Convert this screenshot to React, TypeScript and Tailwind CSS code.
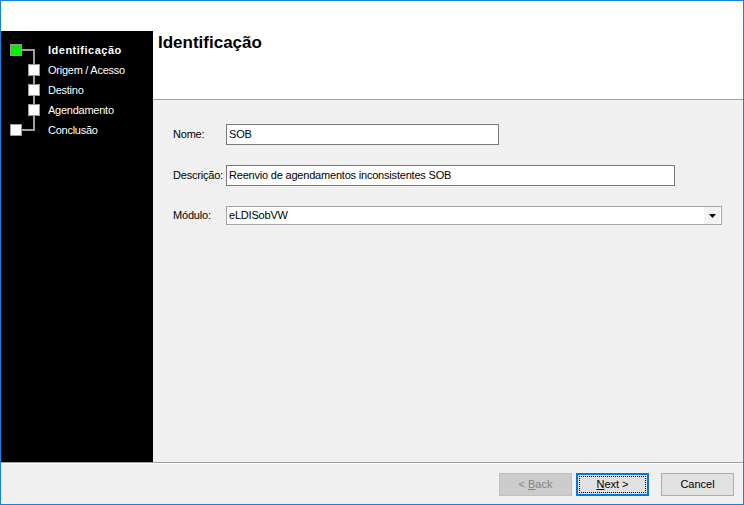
import React from "react";

const steps = [
  { label: "Identificação", active: true },
  { label: "Origem / Acesso", active: false },
  { label: "Destino", active: false },
  { label: "Agendamento", active: false },
  { label: "Conclusão", active: false },
];

function StepTree() {
  // squares + connector lines of the wizard step list
  return (
    <svg width="47" height="110" className="shrink-0">
      <rect x="21" y="18" width="13" height="2" fill="#a0a0a0" />
      <rect x="32" y="18" width="2" height="82" fill="#a0a0a0" />
      <rect x="21" y="98" width="13" height="2" fill="#a0a0a0" />
      <rect x="9.5" y="13.5" width="11" height="11" fill="#00f000" stroke="#999" />
      <rect x="27.5" y="33.5" width="11" height="11" fill="#fff" stroke="#999" />
      <rect x="27.5" y="53.5" width="11" height="11" fill="#fff" stroke="#999" />
      <rect x="27.5" y="73.5" width="11" height="11" fill="#fff" stroke="#999" />
      <rect x="9.5" y="93.5" width="11" height="11" fill="#fff" stroke="#999" />
    </svg>
  );
}

export default function App() {
  return (
    <div className="w-[744px] h-[505px] border border-[#1883d7] bg-white flex flex-col font-['Liberation_Sans',Arial,sans-serif] text-black text-[11px]">
      <div className="h-[462px] flex border-b border-[#a0a0a0]">
        {/* sidebar */}
        <div className="w-[152px] flex flex-col pt-[30px] bg-white">
          <div className="flex-1 bg-black flex">
            <StepTree />
            <div className="flex flex-col pt-[9px]">
              {steps.map((s) => (
                <div
                  key={s.label}
                  className={
                    s.active
                      ? "h-[20px] leading-[20px] text-white font-bold tracking-[0.5px]"
                      : "h-[20px] leading-[20px] text-white tracking-[-0.25px]"
                  }
                >
                  {s.label}
                </div>
              ))}
            </div>
          </div>
        </div>

        {/* main */}
        <div className="flex-1 flex flex-col">
          <div className="h-[99px] bg-white border-b border-[#a0a0a0] pt-[32px] pl-[5px]">
            <h1 className="text-[17px] leading-[20px] font-bold">Identificação</h1>
          </div>
          <div className="flex-1 bg-[#f0f0f0] pl-[20px] pt-[24px] flex flex-col gap-[20px] tracking-[-0.2px]">
            <div className="flex items-center">
              <span className="w-[53px]">Nome:</span>
              <div className="w-[273px] h-[21px] bg-white border border-[#7a7a7a] pl-[2px] flex items-center">SOB</div>
            </div>
            <div className="flex items-center">
              <span className="w-[53px]">Descrição:</span>
              <div className="w-[449px] h-[21px] bg-white border border-[#7a7a7a] pl-[2px] flex items-center">
                Reenvio de agendamentos inconsistentes SOB
              </div>
            </div>
            <div className="flex items-center">
              <span className="w-[53px]">Módulo:</span>
              <div className="w-[496px] h-[19px] bg-white border border-[#a5a5a5] pl-[2px] flex items-center justify-between">
                <span>eLDISobVW</span>
                <div className="w-[16px] h-full bg-[#f3f3f3] flex items-center justify-center mr-[1px]">
                  <svg width="7" height="4">
                    <polygon points="0,0 7,0 3.5,4" fill="#000" />
                  </svg>
                </div>
              </div>
            </div>
          </div>
        </div>
      </div>

      {/* footer */}
      <div className="flex-1 border-t border-white bg-[#f0f0f0] flex justify-end items-start pt-[9px] pr-[9px]">
        <button className="w-[73px] h-[23px] bg-[#cccccc] border border-[#bfbfbf] text-[#838383]">
          &lt; <span className="underline">B</span>ack
        </button>
        <button className="relative ml-[4px] w-[73px] h-[23px] bg-[#e1e1e1] border-2 border-[#0078d7]">
          <span className="absolute inset-[1px] border border-dotted border-black" />
          <span className="relative">
            <span className="underline">N</span>ext &gt;
          </span>
        </button>
        <button className="ml-[12px] w-[73px] h-[23px] bg-[#e1e1e1] border border-[#adadad]">Cancel</button>
      </div>
    </div>
  );
}
